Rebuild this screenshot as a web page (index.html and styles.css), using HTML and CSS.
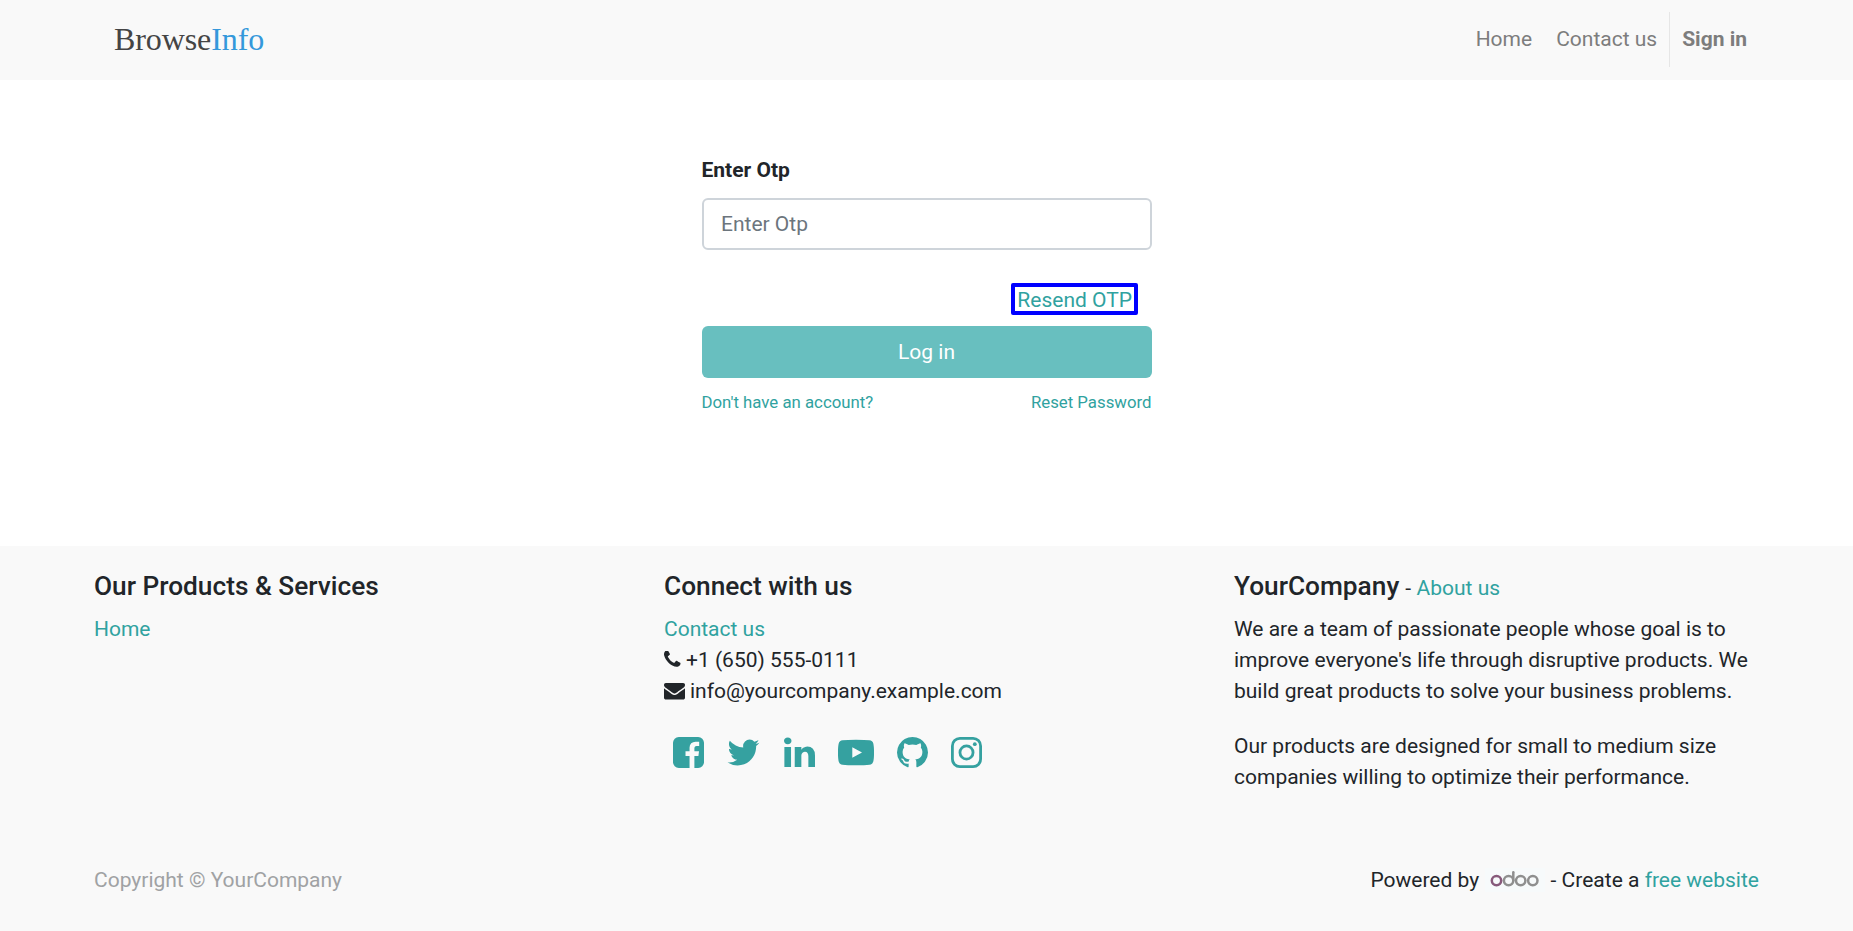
FILE: index.html
```html
<!DOCTYPE html>
<html lang="en">
<head>
<meta charset="utf-8">
<title>Login | BrowseInfo</title>
<link rel="stylesheet" href="styles.css">
</head>
<body>
<header class="site-header">
  <div class="container navbar">
    <a class="brand" href="#">Browse<span class="brand-accent">Info</span></a>
    <nav class="nav">
      <a class="nav-link" href="#">Home</a>
      <a class="nav-link" href="#">Contact us</a>
      <a class="nav-link nav-signin" href="#">Sign in</a>
    </nav>
  </div>
</header>
<main class="main">
  <form class="login-form">
    <label class="label" for="otp">Enter Otp</label>
    <input class="input" id="otp" type="text" placeholder="Enter Otp">
    <div class="resend-row"><a class="resend" href="#">Resend OTP</a></div>
    <button class="submit" type="button">Log in</button>
    <div class="form-links"><a href="#">Don't have an account?</a><a href="#">Reset Password</a></div>
  </form>
</main>
<footer class="footer">
  <div class="container columns">
    <section class="column">
      <h5 class="heading">Our Products &amp; Services</h5>
      <a href="#">Home</a>
    </section>
    <section class="column">
      <h5 class="heading">Connect with us</h5>
      <div><a href="#">Contact us</a></div>
      <div class="contact"><svg class="phone" viewBox="192 192 1408 1408"><path d="M1600 1240q0 27-10 70.5t-21 68.5q-21 50-122 106-94 51-186 51-27 0-53-3.5t-57.5-12.5-47-14.5-55.5-20.5-49-18q-98-35-175-83-127-79-264-216t-216-264q-48-77-83-175-3-9-18-49t-20.5-55.5-14.5-47-12.5-57.5-3.5-53q0-92 51-186 56-101 106-122 25-11 68.5-21t70.5-10q14 0 21 3 18 6 53 76 11 19 30 54t35 63.5 31 53.5q3 4 17.5 25t21.5 35.5 7 28.5q0 20-28.5 50t-62 55-62 53-28.5 46q0 9 5 22.5t8.5 20.5 14 24 11.5 19q76 137 174 235t235 174q2 1 19 11.5t24 14 20.5 8.5 22.5 5q18 0 46-28.5t53-62 55-62 50-28.5q14 0 28.5 7t35.5 21.5 25 17.5q25 15 53.5 31t63.5 35 54 30q70 35 76 53 3 7 3 21z"/></svg><span>+1 (650) 555-0111</span></div>
      <div class="contact"><svg class="envelope" viewBox="0 256 1792 1408"><path d="M1792 710v794q0 66-47 113t-113 47h-1472q-66 0-113-47t-47-113v-794q44 49 101 87 362 246 497 345 57 42 92.500 65.500t94.500 48 110 24.500h2q51 0 110-24.500t94.500-48 92.500-65.500q170-123 498-345 57-39 100-87zm0-294q0 79-49 151t-122 123q-376 261-468 325-10 7-42.500 31t-54 38.500-52 32.500-57.500 27-50 9h-2q-23 0-50-9t-57.500-27-52-32.500-54-38.500-42.500-31q-91-64-262-182.500t-205-142.500q-62-42-117-115.500t-55-136.500q0-78 41.500-130t118.500-52h1472q65 0 112.500 47t47.500 113z"/></svg><span>info@yourcompany.example.com</span></div>
      <div class="social">
        <svg class="icon" viewBox="128 128 1536 1536"><path d="M1376 128q119 0 203.500 84.500t84.500 203.500v960q0 119-84.500 203.500t-203.500 84.500h-188v-595h199l30-232h-229v-148q0-56 23.500-84t91.500-28l122-1v-207q-63-9-178-9-136 0-217.500 80t-81.500 226v171h-200v232h200v595h-532q-119 0-203.500-84.500t-84.500-203.500v-960q0-119 84.500-203.500t203.500-84.500h960z"/></svg>
        <svg class="icon icon-bird" viewBox="128 128 1536 1536"><path d="M1684 408q-67 98-162 167 1 14 1 42 0 130-38 259.500t-115.500 248.500-184.500 210.500-258 146-323 54.500q-271 0-496-145 35 4 78 4 225 0 401-138-105-2-188-64.500t-114-159.500q33 5 61 5 43 0 85-11-112-23-185.500-111.500t-73.500-205.500v-4q68 38 146 41-66-44-105-115t-39-154q0-88 44-163 121 149 294.500 238.500t371.500 99.500q-8-38-8-74 0-134 94.500-228.500t228.500-94.500q140 0 236 102 109-21 205-78-37 115-142 178 93-10 186-50z"/></svg>
        <svg class="icon icon-in" viewBox="128 128 1536 1536"><path d="M477 625v991h-330v-991h330zm21-306q1 73-50.500 122t-135.500 49h-2q-82 0-132-49t-50-122q0-74 51.500-122.500t134.500-48.500 133 48.500 51 122.500zm1166 729v568h-329v-530q0-105-40.500-164.500t-126.500-59.500q-63 0-105.500 34.500t-63.500 85.500q-11 30-11 81v553h-329q2-399 2-647t-1-296l-1-48h329v144h-2q20-32 41-56t56.500-52 87-43.500 114.500-15.500q171 0 275 113.500t104 332.500z"/></svg>
        <svg class="icon icon-wide" viewBox="0 128 1792 1536"><path fill-rule="evenodd" d="M1792 896q0 96-1 150t-8.500 136.500-22.500 147.500q-16 73-69 123t-124 58q-222 25-671 25t-671-25q-71-8-124.500-58t-69.500-123q-14-65-21.500-147.500t-8.500-136.500-1-150 1-150 8.500-136.500 22.500-147.500q16-73 69-123t124-58q222-25 671-25t671 25q71 8 124.500 58t69.500 123q14 65 21.500 147.500t8.500 136.500 1 150zM711 640v518l484-259z"/></svg>
        <svg class="icon" viewBox="128 128 1536 1536"><path d="M896 128q209 0 385.500 103t279.500 279.500 103 385.500q0 251-146.500 451.500t-378.500 277.500q-27 5-40-7t-13-30q0-3 .5-76.500t.5-134.500q0-97-52-142 57-6 102.500-18t94-39 81-66.500 53-105 20.500-150.500q0-119-79-206 37-91-8-204-28-9-81 11t-92 44l-38 24q-93-26-192-26t-192 26q-16-11-42.500-27t-83.500-38.500-85-13.500q-45 113-8 204-79 87-79 206 0 85 20.500 150t52.500 105 80.500 67 94 39 102.500 18q-39 36-49 103-21 10-45 15t-57 5-65.500-21.500-55.500-62.500q-19-32-48.500-52t-49.500-24l-20-3q-21 0-29 4.500t-5 11.500 9 14 13 12l7 5q22 10 43.500 38t31.500 51l10 23q13 38 44 61.500t67 30 69.500 7 55.500-3.500l23-4q0 38 .5 88.500t.5 54.500q0 18-13 30t-40 7q-232-77-378.500-277.500t-146.500-451.500q0-209 103-385.500t279.500-279.500 385.500-103z"/></svg>
        <svg class="icon" viewBox="0 0 31 31"><g fill="none" stroke="currentColor" stroke-width="2.8"><rect x="1.4" y="1.4" width="28.200" height="28.200" rx="7.500"/><circle cx="15.500" cy="15.500" r="6.550"/></g><circle cx="23.800" cy="7.200" r="1.900"/></svg>
      </div>
    </section>
    <section class="column">
      <div class="company"><h5 class="heading company-name">YourCompany</h5><span class="dash">-</span><a href="#">About us</a></div>
      <p class="paragraph">We are a team of passionate people whose goal is to improve everyone's life through disruptive products. We build great products to solve your business problems.</p>
      <p class="paragraph">Our products are designed for small to medium size companies willing to optimize their performance.</p>
    </section>
  </div>
  <div class="container bottom">
    <span class="copyright">Copyright © YourCompany</span>
    <div class="powered"><span>Powered by</span><svg class="odoo" viewBox="0 0 60 24"><g fill="none" stroke="#8f8f8f" stroke-width="2.500"><circle cx="23.600" cy="12.600" r="4.700"/><circle cx="35.700" cy="12.600" r="4.700"/><circle cx="47.800" cy="12.600" r="4.700"/><path stroke-linecap="round" d="M28.300 4.300v8.300"/><circle cx="11.500" cy="12.600" r="4.700" stroke="#875a7b"/></g></svg><span>- Create a <a href="#">free website</a></span></div>
  </div>
</footer>
</body>
</html>
```
FILE: styles.css
```css
* { box-sizing: border-box; }
body {
  margin: 0;
  min-height: 931px;
  display: flex;
  flex-direction: column;
  background: #fff;
  color: #212529;
  font: 21px/31px Roboto, sans-serif;
}
a { color: #30a2a0; text-decoration: none; }
.container { width: 1710px; margin: 0 auto; padding: 0 22.5px; }
.site-header { height: 80px; background: #f9f9f9; }
.navbar { display: flex; justify-content: space-between; }
.brand {
  padding: 21px 0 0 20px;
  color: #444;
  font: 32px/36px "Liberation Serif", serif;
  letter-spacing: -0.1px;
}
.brand-accent { color: #3498db; }
.nav { display: flex; padding-top: 12px; }
.nav-link { height: 55px; padding: 12px 12px 11px; color: #7d7d7d; }
.nav-signin { border-left: 1px solid #e6e6e6; font-weight: 700; }
.main { height: 466px; padding-top: 75px; }
.login-form { width: 450px; margin: 0 auto; }
.label { display: block; margin-bottom: 12px; font-weight: 700; }
.input {
  display: block;
  width: 100%;
  height: 52px;
  padding: 0 17.5px;
  border: 2px solid #ced4da;
  border-radius: 6px;
  font: 21px/31px Roboto, sans-serif;
}
.input::placeholder { color: #6c757d; opacity: 1; }
.resend-row { display: flex; justify-content: flex-end; padding: 33px 14px 11px 0; }
.resend {
  height: 32px;
  padding: 0 1.5px 0 2.5px;
  border: 4px solid #00f;
  border-radius: 2px;
  line-height: 27px;
}
.submit {
  display: block;
  width: 100%;
  height: 52px;
  padding: 0;
  border: 0;
  border-radius: 6px;
  background: #68bfbf;
  color: #fff;
  font: 21px/52px Roboto, sans-serif;
}
.form-links {
  display: flex;
  justify-content: space-between;
  margin-top: 12px;
  font-size: 16.8px;
  line-height: 25px;
}
.footer { flex: 1; background: #f9f9f9; }
.columns { display: grid; grid-template-columns: repeat(3, 570px); height: 287px; padding-top: 25px; }
.column { padding-right: 45px; }
.heading { margin: 0 0 11.5px; font-size: 26.25px; line-height: 31.5px; font-weight: 500; }
.contact { display: flex; align-items: center; gap: 5px; }
.phone { width: 16.5px; height: 16.5px; margin: 0 0.5px 3px 0; fill: currentColor; }
.envelope { width: 21px; height: 16.5px; fill: currentColor; }
.social { display: flex; gap: 23px; padding: 30px 0 0 9px; color: #35a1a0; }
.icon { width: 31px; height: 31px; overflow: visible; fill: currentColor; }
.icon-wide { width: 36px; }
.icon-bird { margin-left: 1px; }
.icon-in { margin-left: 2px; }
.company { height: 43px; }
.company-name { display: inline; }
.dash { margin: 0 5.5px 0 6px; }
.paragraph { margin: 0 0 24px; }
.bottom { display: flex; justify-content: space-between; padding-top: 32px; }
.copyright { color: #a0a2a4; }
.powered { display: flex; }
.odoo { width: 60px; height: 24px; margin: 3px 5.5px 0 6px; background: #f7fafb; }
```
